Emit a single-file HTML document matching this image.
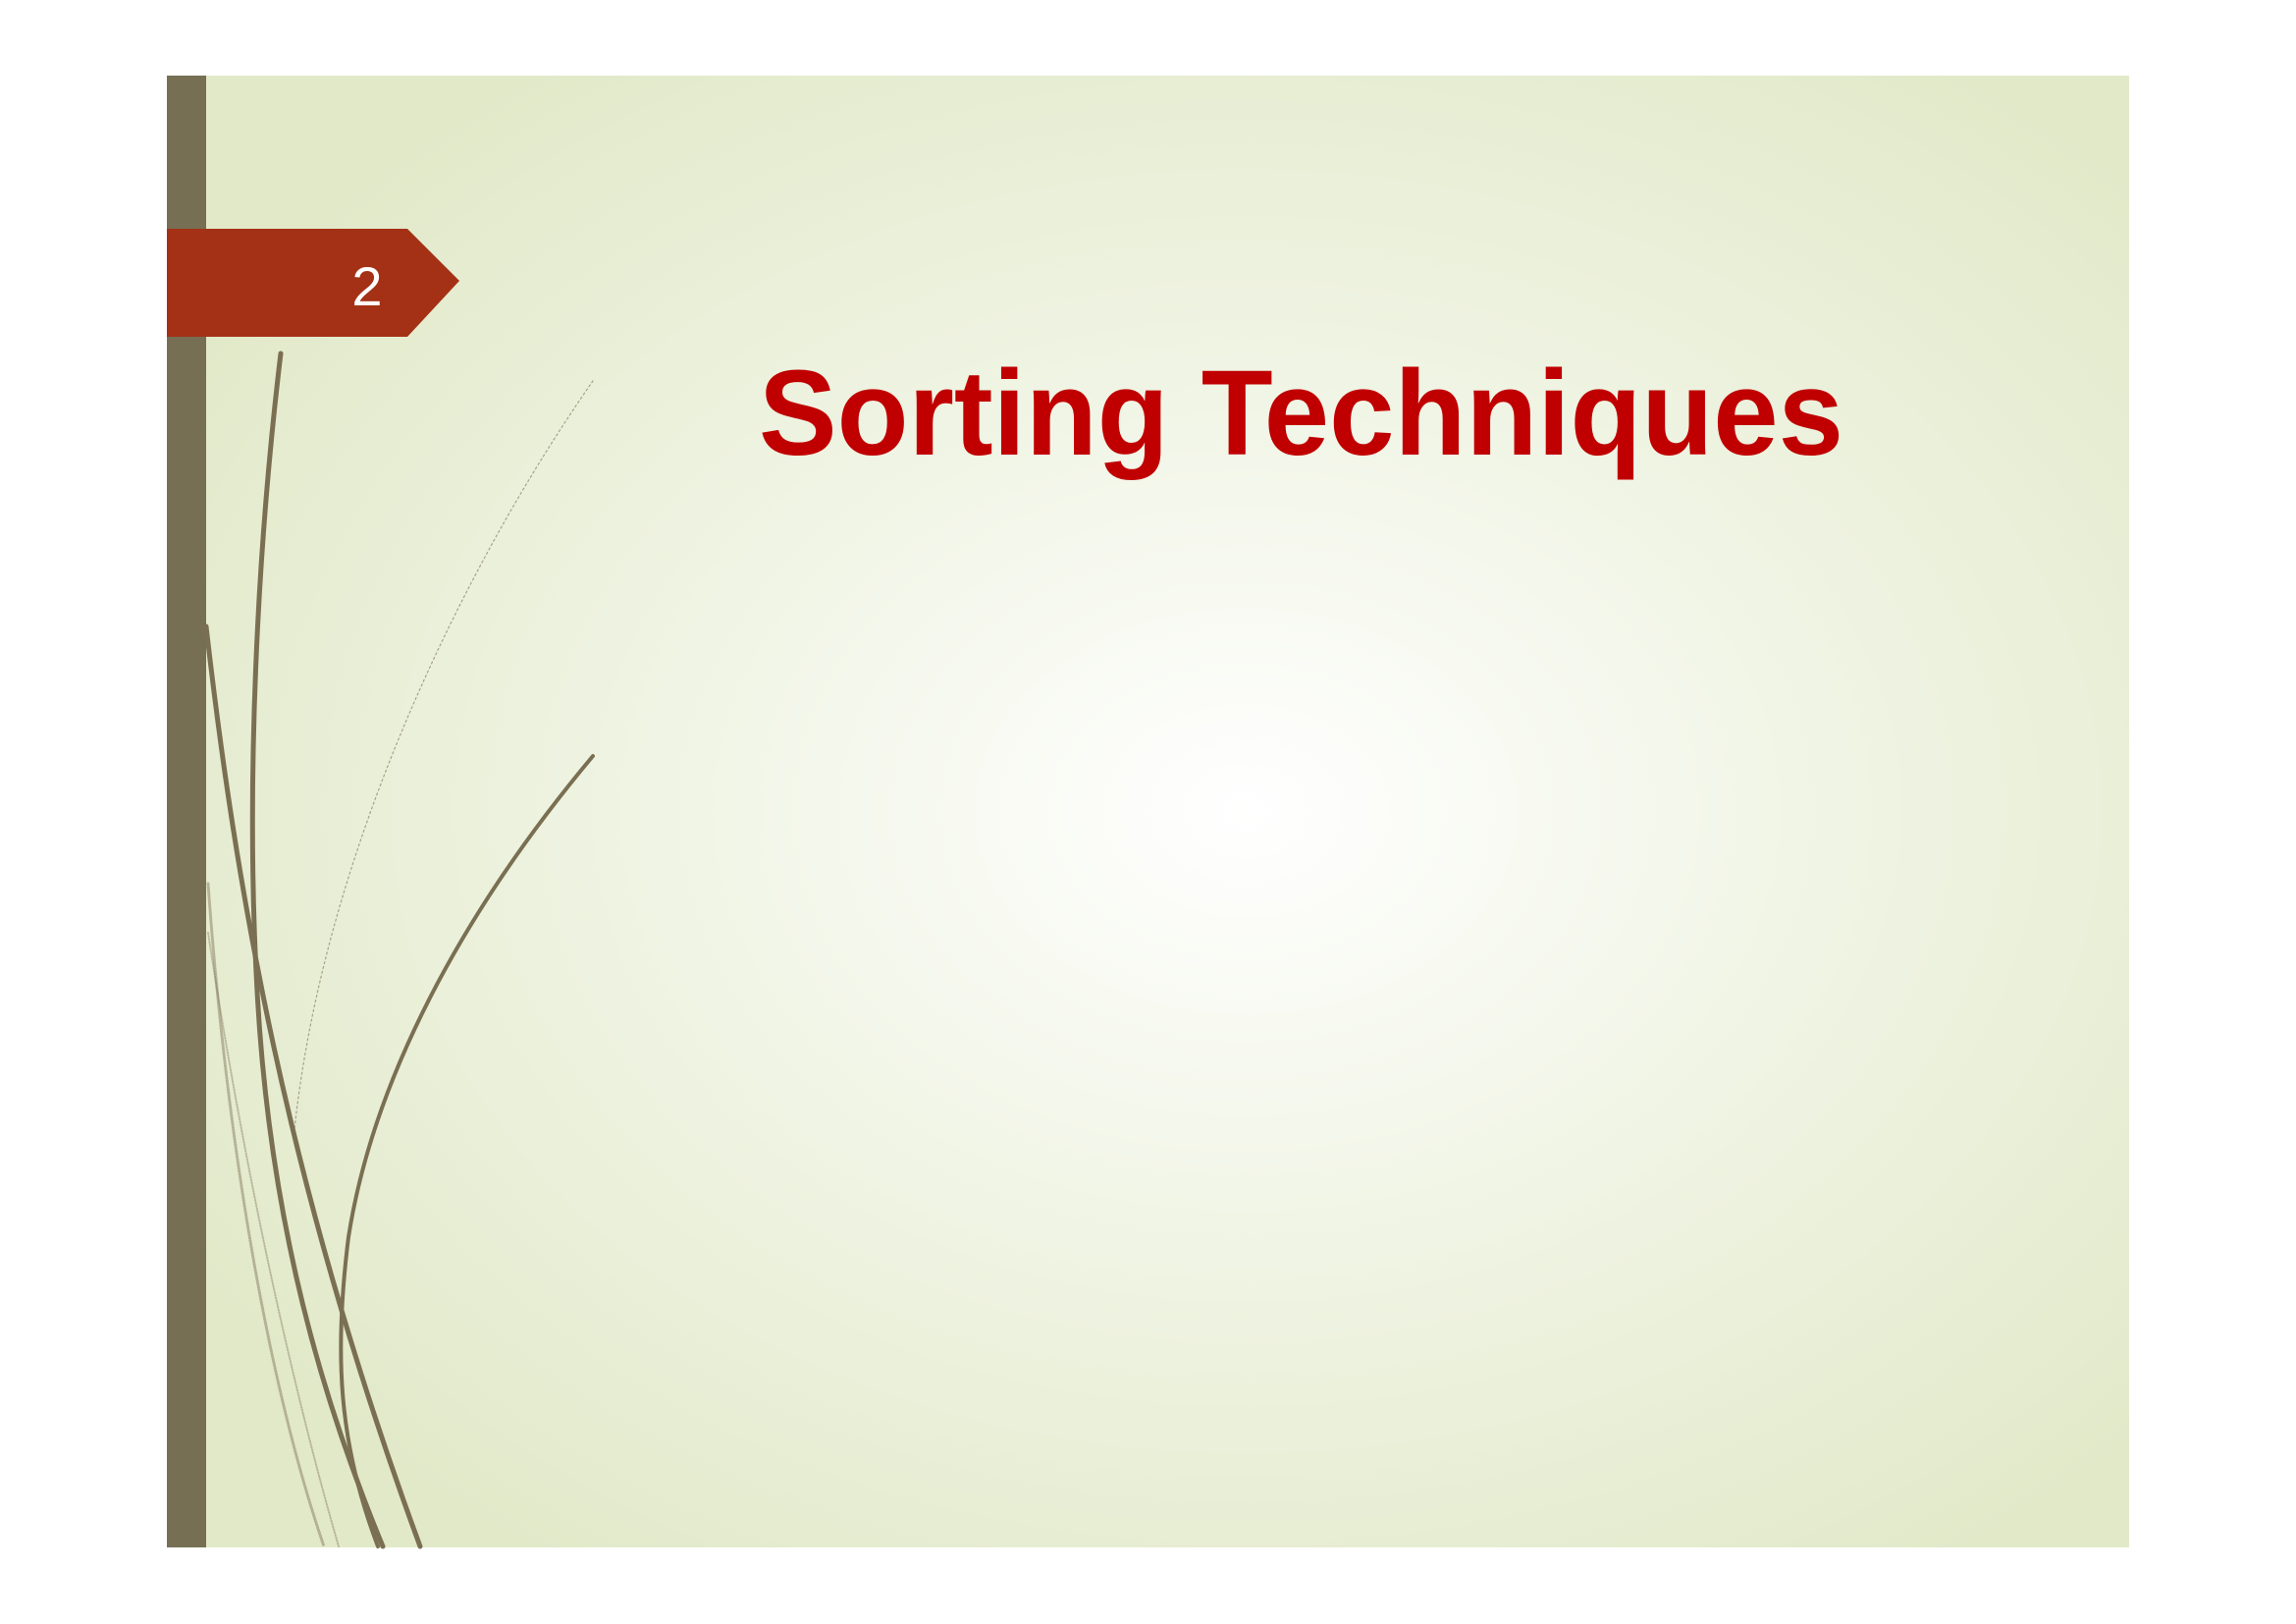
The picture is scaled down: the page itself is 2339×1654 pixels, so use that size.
<!DOCTYPE html>
<html><head><meta charset="utf-8"><style>
html,body{margin:0;padding:0;background:#fff;}
body{width:2339px;height:1654px;position:relative;overflow:hidden;font-family:"Liberation Sans",sans-serif;}
#slide{position:absolute;left:171px;top:77px;width:1998px;height:1499px;
background:radial-gradient(ellipse 62% 62% at 55% 50%,#ffffff 0%,#f1f5e6 45%,#e2e9c9 100%);}
</style></head><body>
<div id="slide"></div>
<svg width="2339" height="1654" style="position:absolute;left:0;top:0">
<rect x="170" y="77" width="40" height="1499" fill="#766f54"/>
<path d="M170 233 H415 L468 286 L415 343 H170 Z" fill="#a43115"/>
<text x="374" y="311" font-family="Liberation Sans,sans-serif" font-size="56" fill="#fff" text-anchor="middle">2</text>
<g fill="none" stroke="#7a6f52" stroke-linecap="round">
<path d="M286 360 C262 560 250 800 262 1010 C275 1250 330 1430 390 1575" stroke-width="5"/>
<path d="M210 638 C240 900 290 1200 428 1575" stroke-width="5"/>
<path d="M604 770 C470 930 380 1100 355 1260 C340 1380 345 1470 385 1575" stroke-width="4"/>
<path d="M604 388 C470 580 330 870 300 1150" stroke-width="1.2" stroke-dasharray="2 3" opacity="0.6"/>
<path d="M212 900 C230 1150 270 1400 330 1575" stroke-width="3" stroke-dasharray="1 2" opacity="0.45"/>
<path d="M212 950 C250 1200 300 1420 345 1575" stroke-width="2" stroke-dasharray="1 2" opacity="0.4"/>
</g>
<text x="773" y="463" font-family="Liberation Sans,sans-serif" font-weight="bold" font-size="123" fill="#c00000" textLength="1105" lengthAdjust="spacingAndGlyphs">Sorting Techniques</text>
</svg>
</body></html>
